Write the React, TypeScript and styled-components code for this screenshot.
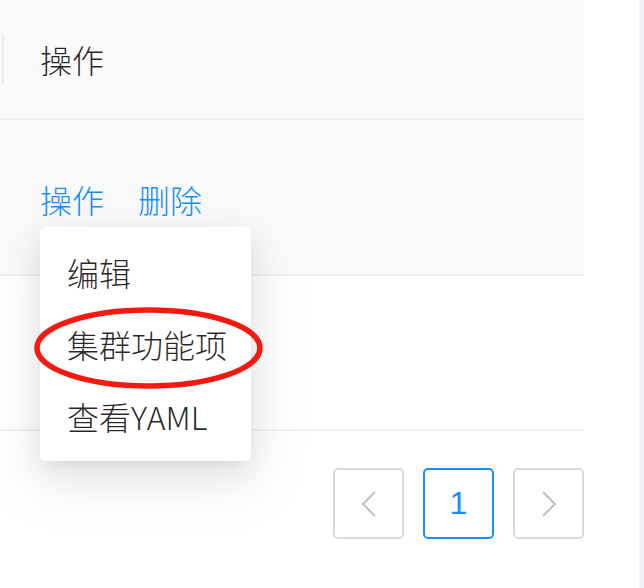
import React from "react";
import styled, { createGlobalStyle } from "styled-components";

const Global = createGlobalStyle`
  html, body { margin: 0; padding: 0; background: #fff; }
  body {
    font-family: "Noto Sans CJK SC", "Noto Sans", "Liberation Sans", sans-serif;
    -webkit-font-smoothing: antialiased;
  }
`;

const Page = styled.div`
  display: flex;
  width: 644px;
  height: 588px;
  overflow: hidden;
`;

const Main = styled.div`
  position: relative;
  width: 639px;
  background: #fff;
  display: flex;
  flex-direction: column;
`;

const SideStrip = styled.div`
  flex: 1;
  background: #f0f2f5;
`;

const Table = styled.div`
  width: 584px;
  display: flex;
  flex-direction: column;
`;

const HeaderRow = styled.div`
  height: 118px;
  background: #fafafa;
  border-bottom: 2px solid #f0f0f0;
  display: flex;
  align-items: center;
`;

const HeaderDivider = styled.div`
  width: 2px;
  height: 50px;
  margin-left: 2px;
  background: #ebebeb;
`;

const HeaderCell = styled.div`
  padding-left: 36px;
  font-size: 32px;
  font-weight: 300;
  line-height: 1;
  color: rgba(0, 0, 0, 0.85);
`;

const BodyRow = styled.div<{ $hover?: boolean; $h: number }>`
  height: ${(p) => p.$h}px;
  background: ${(p) => (p.$hover ? "#fafafa" : "#fff")};
  border-bottom: 2px solid #f0f0f0;
  display: flex;
  align-items: center;
  padding-left: 40px;
`;

const Actions = styled.div`
  display: flex;
  align-items: center;
  gap: 34px;
  margin-top: 3px;
`;

const LinkText = styled.a`
  font-size: 32px;
  font-weight: 300;
  line-height: 1;
  color: #1890ff;
  text-decoration: none;
  cursor: pointer;
`;

const Pagination = styled.div`
  width: 584px;
  margin-top: 37px;
  display: flex;
  justify-content: flex-end;
  gap: 19px;
`;

const PageItem = styled.div<{ $active?: boolean }>`
  box-sizing: border-box;
  width: 71px;
  height: 71px;
  border: 2px solid ${(p) => (p.$active ? "#1890ff" : "#d9d9d9")};
  border-radius: 5px;
  display: flex;
  align-items: center;
  justify-content: center;
  color: ${(p) => (p.$active ? "#1890ff" : "#bfbfbf")};
  font-family: "Liberation Sans", "Noto Sans", sans-serif;
  font-size: 32px;
  font-weight: 500;
  background: #fff;
`;

const Dropdown = styled.div`
  position: absolute;
  left: 40px;
  top: 227px;
  width: 211px;
  padding: 9px 0;
  background: #fff;
  border-radius: 6px;
  box-shadow: 0 6px 12px -8px rgba(0, 0, 0, 0.12),
    0 12px 32px 0 rgba(0, 0, 0, 0.08), 0 18px 56px 16px rgba(0, 0, 0, 0.05);
`;

const MenuItem = styled.div`
  height: 72px;
  display: flex;
  align-items: center;
  padding-left: 27px;
  font-size: 32px;
  font-weight: 300;
  line-height: 1;
  color: rgba(0, 0, 0, 0.85);
  white-space: nowrap;
`;

const Highlight = styled.svg`
  position: absolute;
  left: 34px;
  top: 307px;
  width: 230px;
  height: 84px;
  pointer-events: none;
`;

const Chevron = ({ dir }: { dir: "left" | "right" }) => (
  <svg width="16" height="26" viewBox="0 0 16 26">
    <path
      d={dir === "left" ? "M14 1 L2 13 L14 25" : "M2 1 L14 13 L2 25"}
      fill="none"
      stroke="#bfbfbf"
      strokeWidth="2"
    />
  </svg>
);

export default function App() {
  return (
    <>
      <Global />
      <Page>
        <Main>
          <Table>
            <HeaderRow>
              <HeaderDivider />
              <HeaderCell>操作</HeaderCell>
            </HeaderRow>
            <BodyRow $hover $h={154}>
              <Actions>
                <LinkText>操作</LinkText>
                <LinkText>删除</LinkText>
              </Actions>
            </BodyRow>
            <BodyRow $h={153} />
          </Table>
          <Pagination>
            <PageItem>
              <Chevron dir="left" />
            </PageItem>
            <PageItem $active>1</PageItem>
            <PageItem>
              <Chevron dir="right" />
            </PageItem>
          </Pagination>
          <Dropdown>
            <MenuItem>编辑</MenuItem>
            <MenuItem>集群功能项</MenuItem>
            <MenuItem>查看YAML</MenuItem>
          </Dropdown>
          <Highlight viewBox="0 0 230 84">
            <ellipse
              cx="114.5"
              cy="41"
              rx="111.5"
              ry="38"
              fill="none"
              stroke="#f51a10"
              strokeWidth="5.5"
            />
          </Highlight>
        </Main>
        <SideStrip />
      </Page>
    </>
  );
}
